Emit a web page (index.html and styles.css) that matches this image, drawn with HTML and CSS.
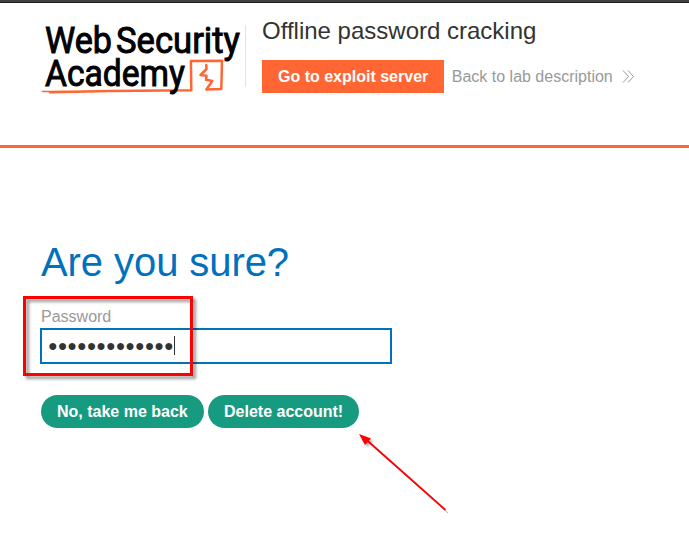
FILE: index.html
```html
<!DOCTYPE html>
<html lang="en">
<head>
<meta charset="utf-8">
<title>Offline password cracking</title>
<link rel="stylesheet" href="styles.css">
</head>
<body>
<header class="lab-header">
  <svg class="logo" width="205" height="80" viewBox="40 20 205 80" role="img" aria-label="Web Security Academy">
    <g class="logo-text">
      <text x="45" y="53.3" textLength="67" lengthAdjust="spacingAndGlyphs">Web</text>
      <text x="116" y="53.3" textLength="124" lengthAdjust="spacingAndGlyphs">Security</text>
    </g>
    <g class="logo-mark">
      <path d="M42.500 91.500 H61 L80 91.700" stroke-width="1.5"/>
      <path d="M50 92.200 L110 91 L191.300 90.300 L190.900 60.900 L222 60.700 L221.300 89 L206.300 89.500 L212.300 81 L206 79.800 L206.500 75.800 L200.500 75 L206.500 69 L206.300 65" stroke-width="2.5"/>
    </g>
    <g class="logo-text">
      <text x="45" y="86" textLength="140" lengthAdjust="spacingAndGlyphs">Academy</text>
    </g>
  </svg>
  <div class="lab-info">
    <h2>Offline password cracking</h2>
    <div class="links">
      <a class="server">Go to exploit server</a>
      <a class="back">Back to lab description</a>
      <svg class="chevrons" width="13" height="13" viewBox="0 0 13 13"><path d="M1 .5 6.500 6.500 1 12.500M6 .5 11.500 6.500 6 12.500"/></svg>
    </div>
  </div>
</header>
<main>
  <h1>Are you sure?</h1>
  <label>Password</label>
  <div class="field"><span>●●●●●●●●●●●●●</span><i class="caret"></i></div>
  <div class="actions"><button>No, take me back</button><button>Delete account!</button></div>
</main>
<div class="highlight"></div>
<svg class="arrow" width="100" height="90" viewBox="355 430 100 90">
  <path class="shadow" d="M368 442 448 513"/>
  <path class="shadow-head" d="M361 436 373 441 367 447Z"/>
  <path class="shaft" d="M365 438.500 445.500 510"/>
  <path class="head" d="M359 434 371 438.500 365 445Z"/>
</svg>
</body>
</html>
```
FILE: styles.css
```css
* { box-sizing: border-box; }
body {
  margin: 0;
  height: 534px;
  overflow: hidden;
  background: #fff;
  color: #333332;
  font: 16px/18px "Liberation Sans", Arial, sans-serif;
}
.lab-header {
  display: flex;
  align-items: flex-start;
  height: 148px;
  padding-left: 40px;
  border-top: 3px solid #1c1c1c;
  border-bottom: 3px solid #ff6633;
  border-image: linear-gradient(#414141 0 2px, #1c1c1c 2px 3px, #ff6633 3px) 3 0 / 3px 0;
}
.logo { display: block; margin-top: 17px; overflow: visible; }
.logo-text { font: 400 37px Roboto, sans-serif; fill: #000; stroke: #000; stroke-width: .95; }
.logo-mark { fill: none; stroke: #ff6633; stroke-linejoin: round; stroke-linecap: round; }
.lab-info {
  position: relative;
  margin-left: 17px;
}
.lab-info::before {
  content: "";
  position: absolute;
  left: -17px;
  top: 22px;
  width: 1px;
  height: 62px;
  background: #e3e3e3;
}
h2 { margin: 14px 0 15px; font-size: 24px; line-height: 28px; font-weight: 400; }
.links { display: flex; align-items: center; }
.server { height: 33px; padding: 8px 16px; background: #ff6633; color: #fff; font-weight: 700; }
.back { margin-left: 7.5px; color: #999; }
.chevrons { margin-left: 9px; fill: none; stroke: #999; stroke-width: 1; }
main { padding: 90px 0 0 41px; }
h1 { margin: 0; font-size: 40px; line-height: 48px; font-weight: 400; color: #0071bc; letter-spacing: -.08px; }
label { display: block; margin-top: 22px; color: #999; }
.field {
  display: flex;
  align-items: center;
  width: 352px;
  height: 36px;
  margin: 2px 0 31px -1px;
  padding-left: 6px;
  border: 2px solid #0071bc;
}
.caret { width: 1px; height: 19px; margin-bottom: 1px; background: #333332; }
.actions { display: flex; gap: 4.3px; }
button {
  height: 33px;
  padding: 0 16px;
  border: 0;
  border-radius: 17px;
  background: #179b80;
  color: #fff;
  font: 700 16px/33px "Liberation Sans", Arial, sans-serif;
}
.highlight {
  position: absolute;
  left: 23px;
  top: 296px;
  width: 170px;
  height: 80px;
  border: 3px solid #f00;
  filter: drop-shadow(3px 3px 1.5px rgba(0, 0, 0, .4));
}
.arrow { position: absolute; left: 355px; top: 430px; }
.shaft { stroke: #f00; stroke-width: 1.7; }
.head { fill: #f00; }
.shadow { stroke: #777; stroke-width: 1; opacity: .6; filter: blur(.6px); }
.shadow-head { fill: #777; opacity: .6; filter: blur(1px); }
```
